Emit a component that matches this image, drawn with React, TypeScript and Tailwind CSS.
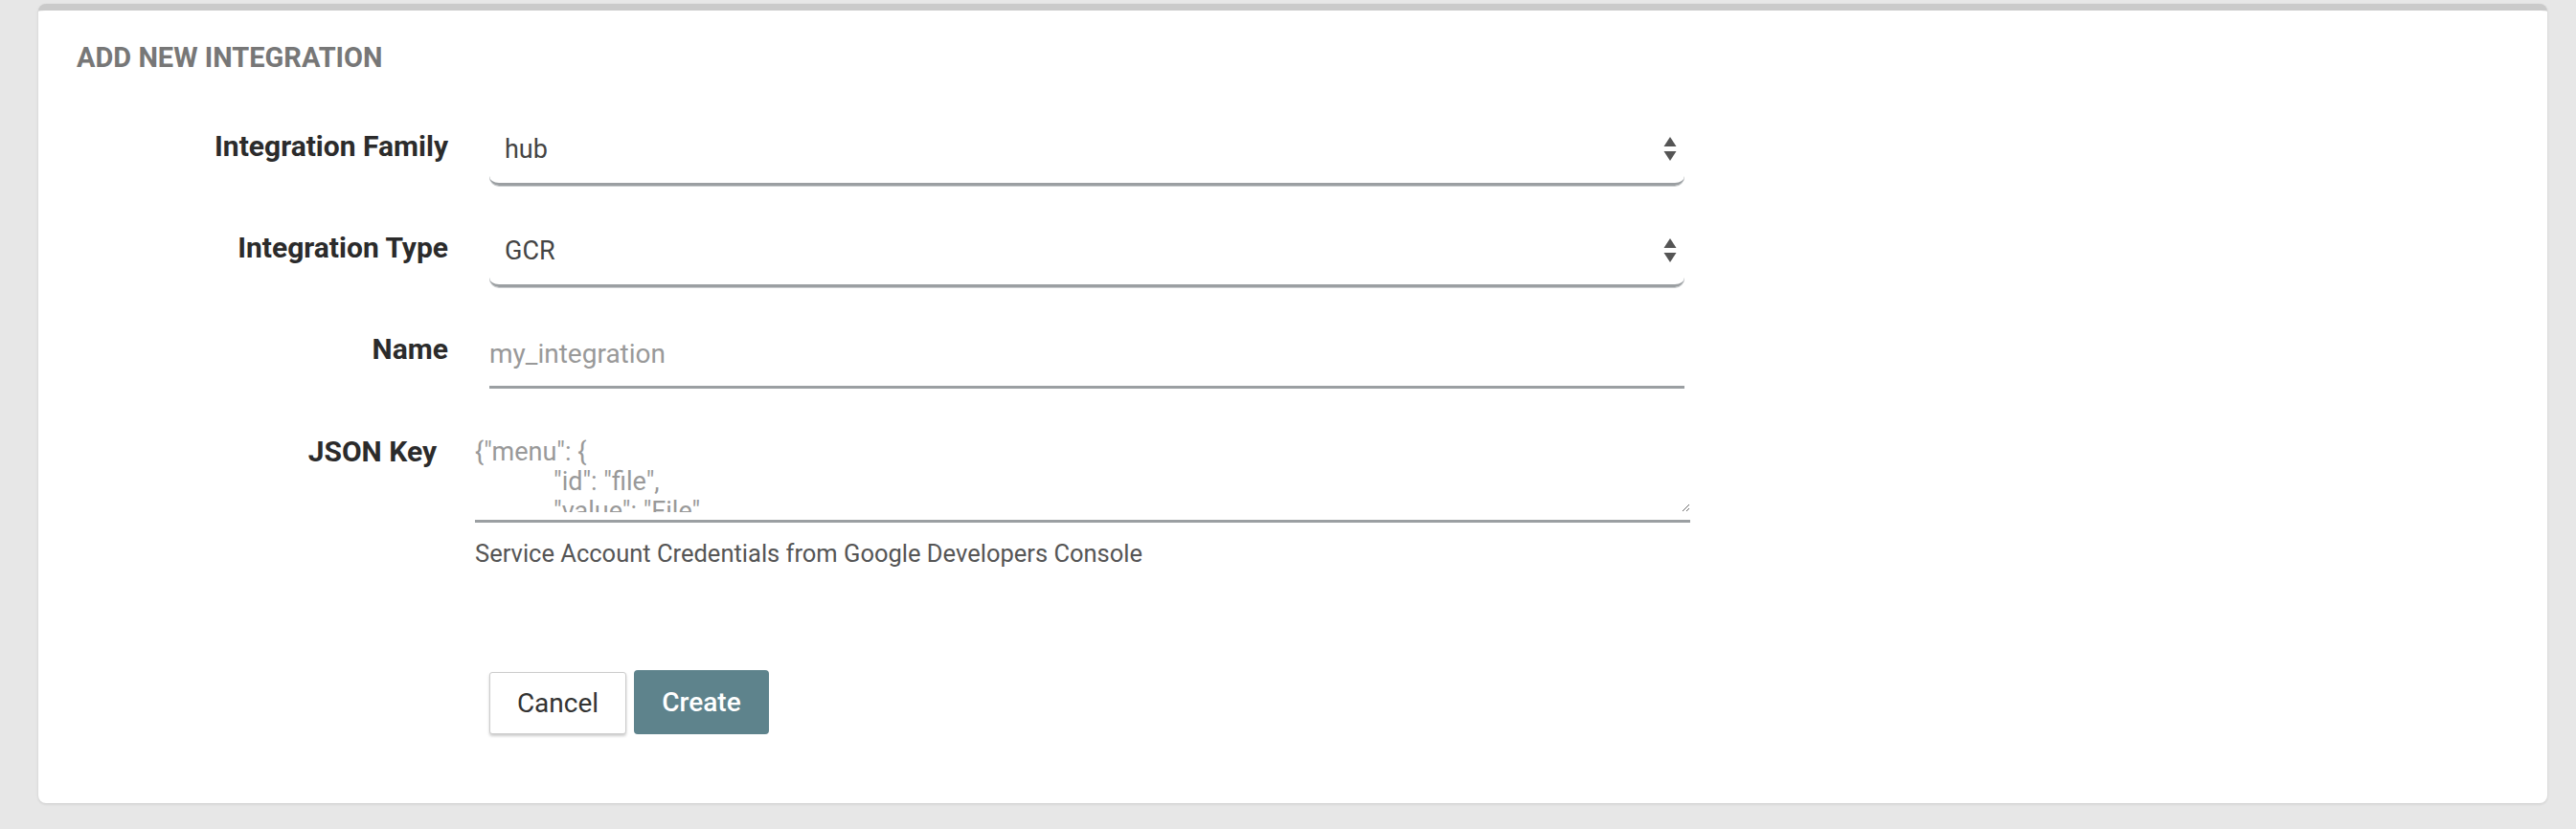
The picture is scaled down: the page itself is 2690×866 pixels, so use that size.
const jsonSample = '{"menu": {\n\t"id": "file",\n\t"value": "File",\n\t"popup": {\n\t\t"menuitem": []\n\t}\n}}'

function Chevrons() {
  return (
    <svg width="14" height="26" viewBox="0 0 14 26" className="shrink-0">
      <path d="M7 0 L13.5 10 L0.5 10 Z" fill="#555" />
      <path d="M0.5 15 L13.5 15 L7 25 Z" fill="#555" />
    </svg>
  )
}

function SelectField({ value }: { value: string }) {
  return (
    <div className="flex h-[82px] w-[1248px] items-center justify-between rounded-b-[10px] border-b-[3px] border-[#9b9fa2] pl-4 pr-[8px] pt-[9px] shadow-[0_1px_0_#c8cbcd]">
      <span className="text-[27px] leading-none text-[#444]">{value}</span>
      <Chevrons />
    </div>
  )
}

function Label({ children }: { children: string }) {
  return (
    <div className="w-[388px] shrink-0 text-right text-[30px] font-bold leading-none text-[#2b2b2b]">
      {children}
    </div>
  )
}

export default function App() {
  return (
    <div className="min-h-[866px] bg-[#e7e7e7] pt-[4px] font-['Roboto',sans-serif]">
      <div className="ml-[40px] mr-[30px] h-[835px] overflow-hidden rounded-lg border-t-[7px] border-[#cacaca] bg-white shadow-[0_1px_3px_rgba(0,0,0,0.12)]">
        <div className="pl-[40px] pt-[35px]">
          <h1 className="text-[29px] font-bold uppercase leading-none text-[#777]">Add new integration</h1>

          <div className="mt-[37px] flex items-center gap-[43px]">
            <Label>Integration Family</Label>
            <SelectField value="hub" />
          </div>

          <div className="mt-[24px] flex items-center gap-[43px]">
            <Label>Integration Type</Label>
            <SelectField value="GCR" />
          </div>

          <div className="mt-[24px] flex items-center gap-[43px]">
            <Label>Name</Label>
            <input
              placeholder="my_integration"
              className="h-[82px] w-[1248px] border-b-[3px] border-[#9b9fa2] bg-transparent pt-[11px] text-[28px] leading-none text-[#444] outline-none placeholder:text-[#999]"
            />
          </div>

          {/* JSON key */}
          <div className="mt-[44px] flex items-start gap-[40px]">
            <div className="w-[376px] shrink-0 pt-[7px] text-right text-[30px] font-bold leading-none text-[#2b2b2b]">
              JSON Key
            </div>
            <div className="flex flex-col">
              <div className="w-[1269px] border-b-[3px] border-[#9b9fa2] pb-[8px]">
                <textarea
                  readOnly
                  value={jsonSample}
                  className="block h-[85px] w-full resize-y overflow-hidden bg-transparent pt-[7px] text-[27px] leading-[31px] text-[#999] outline-none [tab-size:82px]"
                />
              </div>
              <div className="mt-[17px] text-[25.5px] leading-[30px] text-[#555]">
                Service Account Credentials from Google Developers Console
              </div>
            </div>
          </div>

          <div className="ml-[431px] mt-[107px] flex items-start gap-[8px]">
            <button className="mt-[2px] h-[65px] w-[143px] rounded-[3px] border border-[#ccc] bg-white text-[28px] text-[#333] shadow-[0_2px_3px_rgba(0,0,0,0.2)]">
              Cancel
            </button>
            <button className="h-[67px] w-[141px] rounded-[4px] bg-[#5e838c] text-[28px] font-medium text-white">
              Create
            </button>
          </div>
        </div>
      </div>
    </div>
  )
}
